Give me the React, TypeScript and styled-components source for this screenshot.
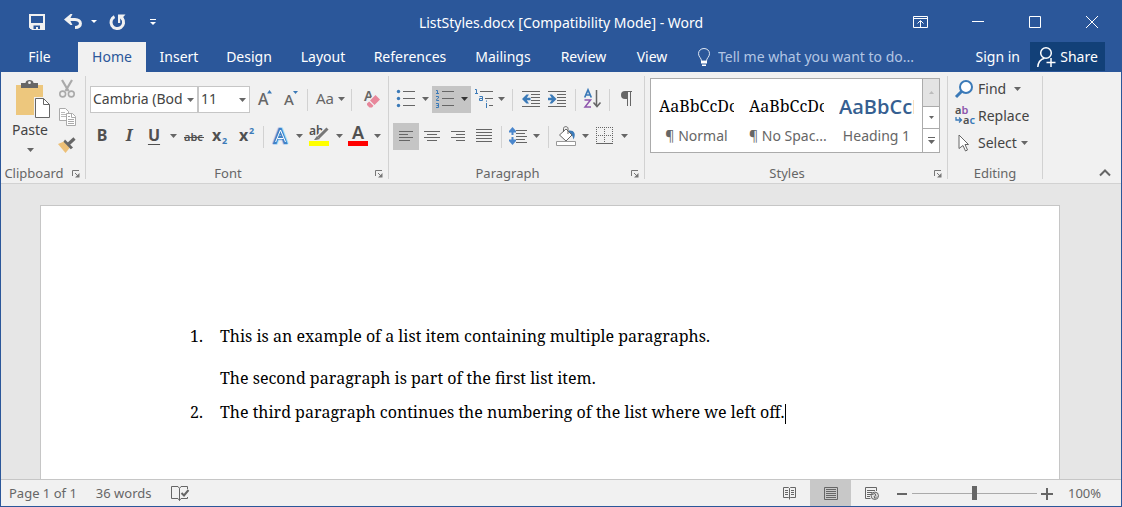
import React from "react";
import styled, { createGlobalStyle } from "styled-components";

const blue = "#2b579a";
const ink = "#444444";
const grey = "#666666";
const accent = "#3b7ab8";
const ui = '"Noto Sans", "Open Sans", sans-serif';
const serif = '"Noto Serif", "Droid Serif", Cambria, "Liberation Serif", serif';

const GlobalStyle = createGlobalStyle`
  *, *::before, *::after { box-sizing: border-box; }
  body { margin: 0; font-family: ${ui}; font-size: 14px; color: ${ink}; background: #e6e6e6; }
  button, input, select { font: inherit; color: inherit; margin: 0; padding: 0; border: 0; background: none; border-radius: 0; }
  button { cursor: default; white-space: nowrap; }
`;

const Drawing = styled.svg<{ $even: boolean }>`
  display: block;
  flex: none;
  overflow: visible;
  margin-top: ${(p) => (p.$even ? 1 : 0)}px;
`;

const Window = styled.div`
  display: flex;
  flex-direction: column;
  min-height: 100vh;
  border: 1px solid ${blue};
  border-top: 0;
`;

const TitleBar = styled.header`
  display: grid;
  grid-template-columns: 1fr auto 1fr;
  align-items: center;
  height: 42px;
  background: ${blue};
  color: #fff;
`;

const QuickAccess = styled.div`
  display: flex;
  align-items: center;
  padding-left: 19px;
`;

const Title = styled.h1`
  margin: 0;
  padding-top: 2px;
  font-size: 14px;
  font-weight: 400;
  white-space: nowrap;
`;

const WindowControls = styled.div`
  display: flex;
  justify-content: flex-end;
  padding-right: 1px;
`;

const BarButton = styled.button<{ $w: number }>`
  display: flex;
  align-items: center;
  justify-content: center;
  width: ${(p) => p.$w}px;
  height: 39px;
`;

const TabBar = styled.nav`
  display: flex;
  height: 30px;
  background: ${blue};
  color: #fff;
`;

const Tab = styled.button<{ $w: number; $active?: boolean }>`
  width: ${(p) => p.$w}px;
  padding-bottom: 2px;
  background: ${(p) => (p.$active ? "#f1f1f1" : "transparent")};
  color: ${(p) => (p.$active ? blue : "#fff")};
`;

const TellMe = styled.label`
  display: flex;
  flex: 1;
  align-items: center;
  gap: 8px;
  padding: 0 0 2px 15px;
`;

const TellMeInput = styled.input`
  flex: 1;
  min-width: 0;
  outline: none;
  &::placeholder { color: #b3c6e4; opacity: 1; }
`;

const Account = styled.div`
  display: flex;
  align-items: flex-start;
  gap: 10px;
  padding-right: 16px;
`;

const SignIn = styled.button`
  height: 30px;
  padding-bottom: 2px;
`;

const Share = styled.button`
  display: flex;
  align-items: center;
  justify-content: center;
  gap: 4px;
  width: 75px;
  height: 29px;
  background: #124078;
`;

const Ribbon = styled.section`
  display: flex;
  height: 112px;
  background: #f1f1f1;
  border-bottom: 1px solid #d2d2d2;
`;

const Group = styled.section<{ $w: number }>`
  display: flex;
  flex: none;
  flex-direction: column;
  justify-content: space-between;
  width: ${(p) => p.$w}px;
  margin: 4px 0;
  border-right: 1px solid #d2d2d2;
`;

const GroupBody = styled.div`
  display: flex;
  flex-direction: column;
  gap: 10px;
  padding: 10px 0 0 4px;
`;

const GroupFooter = styled.footer<{ $launcher?: boolean }>`
  display: grid;
  grid-template-columns: 1fr ${(p) => (p.$launcher ? "18px" : "0")};
  align-items: center;
  height: 12px;
  font-size: 13px;
  line-height: 12px;
  text-align: center;
  color: ${grey};
`;

const LauncherButton = styled.button`
  justify-self: end;
  margin-right: 5px;
`;

const Row = styled.div`
  display: flex;
  align-items: center;
  height: 27px;
`;

const Tool = styled.button<{ $w: number; $on?: boolean }>`
  display: flex;
  flex: none;
  align-items: center;
  justify-content: center;
  width: ${(p) => p.$w}px;
  height: 27px;
  padding-bottom: 2px;
  background: ${(p) => (p.$on ? "#c5c5c5" : "transparent")};
`;

const Divider = styled.span<{ $w: number }>`
  display: flex;
  flex: none;
  justify-content: center;
  width: ${(p) => p.$w}px;
  &::before { content: ""; width: 1px; height: 22px; background: #d2d2d2; }
`;

const Combo = styled.label<{ $w: number }>`
  display: grid;
  flex: none;
  align-items: center;
  width: ${(p) => p.$w}px;
  height: 27px;
  border: 1px solid #c6c6c6;
  background: #fff;
  & > * { grid-area: 1 / 1; }
  & > svg { justify-self: end; margin-right: 3px; pointer-events: none; }
`;

const ComboSelect = styled.select`
  appearance: none;
  width: 100%;
  height: 25px;
  padding: 0 15px 2px 2px;
  outline: none;
  overflow: hidden;
`;

const Glyph = styled.span<{ $italic?: boolean; $underline?: boolean }>`
  font-size: 16px;
  line-height: 21px;
  font-weight: 700;
  font-style: ${(p) => (p.$italic ? "italic" : "normal")};
  font-family: ${(p) => (p.$italic ? '"Noto Serif", "Liberation Serif", serif' : ui)};
  text-decoration: ${(p) => (p.$underline ? "underline" : "none")};
  text-underline-offset: 3px;
  color: #505050;
`;

const ClipboardBody = styled.div`
  display: grid;
  grid-template-columns: 50px 34px;
  padding-left: 4px;
`;

const PasteButton = styled.button`
  display: flex;
  flex-direction: column;
  align-items: center;
  padding-top: 3px;
  line-height: 24px;
`;

const ClipboardTools = styled.div`
  display: flex;
  flex-direction: column;
  gap: 1px;
`;

const Gallery = styled.div`
  display: flex;
  width: 290px;
  height: 75px;
  margin: 2px 0 0 5px;
  padding-left: 1px;
  border: 1px solid #ababab;
  background: #fff;
`;

const StyleCell = styled.button`
  display: flex;
  flex-direction: column;
  flex: none;
  width: 90px;
  padding: 14px 7px 0;
  text-align: center;
  color: ${grey};
`;

const Sample = styled.span<{ $heading?: boolean }>`
  overflow: hidden;
  width: 75px;
  height: 27px;
  line-height: 27px;
  text-align: left;
  font-family: ${(p) => (p.$heading ? '"Open Sans", "Noto Sans", sans-serif' : serif)};
  font-size: ${(p) => (p.$heading ? 20 : 16)}px;
  font-weight: ${(p) => (p.$heading ? 600 : 400)};
  color: ${(p) => (p.$heading ? "#365f91" : "#000")};
`;

const SampleName = styled.span`
  line-height: 32px;
  width: 75px;
`;

const GalleryScroll = styled.div`
  display: grid;
  grid-template-rows: 27px 22px 1fr;
  flex: 1;
  border-left: 1px solid #ababab;
`;

const ScrollButton = styled.button<{ $off?: boolean }>`
  display: flex;
  align-items: center;
  justify-content: center;
  background: ${(p) => (p.$off ? "#e3e3e3" : "#fff")};
  & + & { border-top: 1px solid #ababab; }
`;

const EditingBody = styled.div`
  display: flex;
  flex-direction: column;
  padding-left: 6px;
`;

const EditButton = styled.button`
  display: flex;
  align-items: center;
  height: 27px;
  padding-bottom: 2px;
  gap: 4px;
`;

const IconSlot = styled.span`
  display: flex;
  justify-content: center;
  width: 20px;
`;

const RibbonEnd = styled.div`
  display: flex;
  flex: 1;
  align-items: flex-end;
  justify-content: flex-end;
  padding: 0 10px 6px 0;
`;

const Workspace = styled.main`
  display: flex;
  flex: 1;
  padding: 21px 61px 0 39px;
  background: #e6e6e6;
`;

const Page = styled.article`
  flex: 1;
  padding: 120px 140px 40px 149px;
  border: 1px solid #c6c6c6;
  border-bottom: 0;
  background: #fff;
  color: #000;
  font-family: ${serif};
  font-size: 16px;
  font-kerning: none;
  line-height: 20px;
`;

const List = styled.ol`
  margin: 0;
  padding: 0;
  list-style: none;
`;

const Item = styled.li`
  display: grid;
  grid-template-columns: 30px 1fr;
  padding-bottom: 14px;
`;

const Paragraph = styled.p`
  margin: 0;
  & + & { margin-top: 22px; }
`;

const Caret = styled.span`
  display: inline-block;
  width: 1px;
  height: 20px;
  vertical-align: middle;
  background: #000;
`;

const StatusBar = styled.footer`
  display: flex;
  align-items: stretch;
  justify-content: space-between;
  height: 27px;
  border-top: 1px solid #c6c6c6;
  background: #f1f1f1;
  font-size: 13px;
  color: ${grey};
`;

const StatusGroup = styled.div<{ $gap?: number }>`
  display: flex;
  align-items: center;
  gap: ${(p) => p.$gap || 0}px;
  padding: 0 20px 0 8px;
`;

const ViewButton = styled.button<{ $on?: boolean }>`
  display: flex;
  align-items: center;
  justify-content: center;
  width: 41px;
  height: 26px;
  background: ${(p) => (p.$on ? "#c8c8c8" : "transparent")};
`;

const ZoomStep = styled.button`
  display: flex;
  align-items: center;
  justify-content: center;
  width: 20px;
  height: 26px;
`;

const Slider = styled.input`
  appearance: none;
  width: 125px;
  height: 14px;
  background: linear-gradient(#aaa, #aaa) center / 100% 1px no-repeat;
  &::-webkit-slider-thumb { appearance: none; width: 5px; height: 14px; background: ${grey}; border: 0; }
`;

const ZoomValue = styled.span`
  margin-left: 11px;
  width: 33px;
  text-align: center;
`;

const Svg = ({ w, h, children }: { w: number; h: number; children: React.ReactNode }) => (
  <Drawing $even={h % 2 === 0} width={w} height={h} viewBox={`0 0 ${w} ${h}`} fill="none" aria-hidden="true">
    {children}
  </Drawing>
);

const Down = ({ color = grey }: { color?: string }) => (
  <Svg w={7} h={5}><path d="M0 1h7L3.500 5z" fill={color} /></Svg>
);

const More = ({ color = grey }: { color?: string }) => (
  <Svg w={7} h={7}><path d="M0 .5h7" stroke={color} /><path d="M0 3h7L3.500 7z" fill={color} /></Svg>
);

const Launcher = () => (
  <Svg w={8} h={8}>
    <path d="M.5 6V.5H7M3 3l3 3" stroke="#777" />
    <path d="M7.500 3v4.500H3z" fill="#777" />
  </Svg>
);

const Footer = ({ name, launcher = true }: { name: string; launcher?: boolean }) => (
  <GroupFooter $launcher={launcher}>
    <span>{name}</span>
    {launcher && <LauncherButton aria-label={`${name} settings`}><Launcher /></LauncherButton>}
  </GroupFooter>
);

const AlignIcon = ({ rows, w = 16 }: { rows: [number, number][]; w?: number }) => (
  <Svg w={w} h={13}>
    {rows.map(([x, len], i) => (
      <path key={i} d={`M${x} ${i * 3 + (rows.length === 4 ? 2.5 : 0.5)}h${len}`} stroke={grey} />
    ))}
  </Svg>
);

const IndentIcon = ({ out }: { out?: boolean }) => (
  <Svg w={18} h={16}>
    <path d="M0 .5h18M9 3.500h9M9 6.500h9M9 9.500h9M9 12.500h9M0 15.500h18" stroke={grey} />
    {out
      ? <path d="M0 8l4.500-4.500H7L4.800 6.700H8.500v2.600H4.800L7 12.500H4.500z" fill={accent} />
      : <path d="M8.500 8L4 3.500H1.500L3.700 6.700H0v2.600h3.700L1.500 12.500H4z" fill={accent} />}
  </Svg>
);

const t = { fontFamily: "Noto Sans", fontWeight: 700 } as const;

const SaveIcon = () => (
  <Svg w={16} h={16}>
    <path d="M1 1h14v14H3.500L1 13z" stroke="#f1f1f1" strokeWidth="2" />
    <path d="M1 9h14v6H1z" fill="#f1f1f1" />
    <path d="M4.500 11.500H11V15H9v-2H7v2H4.500z" fill={blue} />
  </Svg>
);

const UndoIcon = () => (
  <Svg w={18} h={15}>
    <path d="M2.500 5.500h8.500c7 0 7.500 8 0 8" stroke="#f1f1f1" strokeWidth="3" />
    <path d="M0 5.500L6.500 0h2L5.700 5.500 8.500 11h-2z" fill="#f1f1f1" />
  </Svg>
);

const RedoIcon = () => (
  <Svg w={17} h={16}>
    <path d="M5.500 2.600A6.300 6.300 0 1 0 13.300 4.400" stroke="#f1f1f1" strokeWidth="3" />
    <path d="M9 .5h7.500L14.200 3l1 3-1.700.8-2.300-2.300V9H9z" fill="#f1f1f1" />
  </Svg>
);

const PasteIcon = () => (
  <Svg w={40} h={38}>
    <g transform="translate(6 0)">
      <path d="M0 5h27v30H0z" fill="#edc77d" />
      <path d="M5 3h4.500c0-4 8-4 8 0H22v5H5z" fill={grey} />
      <circle cx="13.500" cy="2.700" r="1.400" fill="#f1f1f1" />
      <path d="M18 17h10l6.500 6.500V38H18z" fill="#f1f1f1" />
      <path d="M19.500 18.500h8l6 6v13h-14z" fill="#fff" stroke="#666" />
      <path d="M27.500 18.500v6h6" stroke="#666" />
    </g>
  </Svg>
);

const CutIcon = () => (
  <Svg w={16} h={18}>
    <path d="M3 0l6.500 11M13 0L6.500 11" stroke="#aaa" strokeWidth="2.200" />
    <circle cx="3.700" cy="14" r="2.900" stroke="#aaa" strokeWidth="1.600" />
    <circle cx="12.300" cy="14" r="2.900" stroke="#aaa" strokeWidth="1.600" />
  </Svg>
);

const CopyIcon = () => (
  <Svg w={17} h={18}>
    <path d="M.5.5h6l3 3v9h-9z" fill="#fff" stroke="#aaa" />
    <path d="M2 4.500h4M2 6.500h5M2 8.500h5" stroke="#bbb" />
    <path d="M7.500 5.500h6l3 3v9h-9z" fill="#fff" stroke="#aaa" />
    <path d="M12.500 5.500v4h4M9 8.500h2M9 11.500h6M9 13.500h6M9 15.500h6" stroke="#aaa" />
  </Svg>
);

const PainterIcon = () => (
  <Svg w={18} h={16}>
    <path d="M0 7l6-2.500 6 6L7.500 16z" fill="#edc077" />
    <path d="M7 2.500l8 8-2.200 1.800-7.300-7.600z" fill={grey} />
    <path d="M10.500 7l6-5.500" stroke={grey} strokeWidth="3.200" />
  </Svg>
);

const App = () => (
  <>
    <GlobalStyle />
    <Window>
      <TitleBar>
        <QuickAccess>
          <BarButton $w={33} aria-label="Save"><SaveIcon /></BarButton>
          <BarButton $w={39} aria-label="Undo"><UndoIcon /></BarButton>
          <BarButton $w={4} aria-label="Undo history"><Svg w={6} h={3}><path d="M0 0h6L3 3z" fill="#fff" /></Svg></BarButton>
          <BarButton $w={42} aria-label="Repeat"><RedoIcon /></BarButton>
          <BarButton $w={29} aria-label="Customize toolbar"><Svg w={6} h={6}><path d="M0 .5h6" stroke="#fff" /><path d="M0 3h6L3 6z" fill="#fff" /></Svg></BarButton>
        </QuickAccess>
        <Title>ListStyles.docx [Compatibility Mode] - Word</Title>
        <WindowControls>
          <BarButton $w={58} aria-label="Ribbon display options">
            <Svg w={15} h={12}><path d="M.5.5h14v11H.5zM0 2.500h15M7.500 11V5M4.500 7.500l3-3 3 3" stroke="#fff" /></Svg>
          </BarButton>
          <BarButton $w={57} aria-label="Minimize"><Svg w={12} h={2}><path d="M0 .5h12" stroke="#fff" /></Svg></BarButton>
          <BarButton $w={57} aria-label="Maximize"><Svg w={12} h={12}><path d="M.5.5h11v11H.5z" stroke="#fff" /></Svg></BarButton>
          <BarButton $w={57} aria-label="Close"><Svg w={12} h={12}><path d="M0 0l12 12M12 0L0 12" stroke="#fff" /></Svg></BarButton>
        </WindowControls>
      </TitleBar>

      <TabBar>
        <Tab $w={77}>File</Tab>
        <Tab $w={68} $active>Home</Tab>
        <Tab $w={66}>Insert</Tab>
        <Tab $w={74}>Design</Tab>
        <Tab $w={74}>Layout</Tab>
        <Tab $w={100}>References</Tab>
        <Tab $w={86}>Mailings</Tab>
        <Tab $w={75}>Review</Tab>
        <Tab $w={62}>View</Tab>
        <TellMe>
          <Svg w={12} h={18}>
            <path d="M3.500 13c0-3-3-4-3-7.300C.5 2.500 3 .5 6 .5s5.500 2 5.500 5.200c0 3.300-3 4.300-3 7.300z" stroke="#dfe7f3" />
            <path d="M3 13h6v2.500H3zM4 16.500h4v1.500H4z" fill="#fff" />
          </Svg>
          <TellMeInput aria-label="Tell me what you want to do" placeholder="Tell me what you want to do..." />
        </TellMe>
        <Account>
          <SignIn>Sign in</SignIn>
          <Share>
            <Svg w={19} h={20}>
              <circle cx="9" cy="6" r="5.300" stroke="#fff" strokeWidth="1.500" />
              <path d="M.8 20c.3-5 3-7.800 6.700-8.800M14 11v9M9.500 15.500h9" stroke="#fff" strokeWidth="1.500" />
            </Svg>
            Share
          </Share>
        </Account>
      </TabBar>

      <Ribbon>
        <Group $w={85}>
          <ClipboardBody>
            <PasteButton>
              <PasteIcon />
              Paste
              <Svg w={7} h={11}><path d="M0 6h7l-3.500 4z" fill={grey} /></Svg>
            </PasteButton>
            <ClipboardTools>
              <Tool $w={24} aria-label="Cut"><CutIcon /></Tool>
              <Tool $w={24} aria-label="Copy"><CopyIcon /></Tool>
              <Tool $w={24} aria-label="Format painter"><PainterIcon /></Tool>
            </ClipboardTools>
          </ClipboardBody>
          <Footer name="Clipboard" />
        </Group>

        <Group $w={303}>
          <GroupBody>
            <Row>
              <Combo $w={108}>
                <ComboSelect aria-label="Font"><option>Cambria (Body)</option></ComboSelect>
                <Down />
              </Combo>
              <Combo $w={52}>
                <ComboSelect aria-label="Font size"><option>11</option></ComboSelect>
                <Down />
              </Combo>
              <Tool $w={30} aria-label="Grow font">
                <Svg w={15} h={17}><text x="0" y="15" fontSize="16" fill={grey} style={{ ...t, fontWeight: 500 }}>A</text><path d="M9 3.500L11.500 0 14 3.500z" fill={accent} /></Svg>
              </Tool>
              <Tool $w={22} aria-label="Shrink font">
                <Svg w={15} h={17}><text x="0" y="15" fontSize="15" fill={grey} style={{ ...t, fontWeight: 500 }}>A</text><path d="M9 1h5l-2.500 3z" fill={accent} /></Svg>
              </Tool>
              <Divider $w={10} />
              <Tool $w={26} aria-label="Change case"><Svg w={19} h={17}><text x="0" y="14" fontSize="15" fill={grey} fontFamily="Noto Sans">Aa</text></Svg></Tool>
              <Tool $w={6} aria-label="Case options"><Down /></Tool>
              <Divider $w={15} />
              <Tool $w={26} aria-label="Clear formatting">
                <Svg w={16} h={19}>
                  <text x="0" y="12" fontSize="14" fill={grey} fontFamily="Noto Sans" fontWeight="600">A</text>
                  <path d="M2 14l9-9.500 6 6-8 9H5z" fill="#f1f1f1" />
                  <path d="M6 11.500L11.500 6l4.500 4.500-5.500 5.500zM5.200 12.500l4.300 4.300-1.500 1.700H5.500L3 16v-1.500z" fill="#e8879b" />
                </Svg>
              </Tool>
            </Row>
            <Row>
              <Tool $w={24} aria-label="Bold"><Glyph>B</Glyph></Tool>
              <Tool $w={30} aria-label="Italic"><Glyph $italic>I</Glyph></Tool>
              <Tool $w={20} aria-label="Underline"><Glyph $underline>U</Glyph></Tool>
              <Tool $w={18} aria-label="Underline style"><Down /></Tool>
              <Tool $w={24} aria-label="Strikethrough">
                <Svg w={20} h={15}><text x="0" y="13" fontSize="11" fontFamily="Noto Sans" fontWeight="600" fill="#505050">abc</text><path d="M0 9.500h20" stroke="#505050" /></Svg>
              </Tool>
              <Tool $w={28} aria-label="Subscript">
                <Svg w={16} h={19}><text x="0" y="15" fontSize="16" fill="#505050" style={t}>x</text><text x="10" y="18" fontSize="9" fill={accent} style={t}>2</text></Svg>
              </Tool>
              <Tool $w={26} aria-label="Superscript">
                <Svg w={16} h={19}><text x="0" y="15" fontSize="16" fill="#505050" style={t}>x</text><text x="10" y="8" fontSize="9" fill={accent} style={t}>2</text></Svg>
              </Tool>
              <Divider $w={7} />
              <Tool $w={28} aria-label="Text effects">
                <Svg w={16} h={19}>
                  <text x="1" y="17" fontSize="19" fill="#bcd6f0" stroke="#bcd6f0" strokeWidth="4" strokeLinejoin="round" fontFamily="Noto Sans">A</text>
                  <text x="1" y="17" fontSize="19" fill="#3f83c8" stroke="#3f83c8" strokeWidth="2" fontFamily="Noto Sans">A</text>
                  <path d="M2.600 16L7.500 4l5 12M4.500 12.500h6" stroke="#fff" />
                </Svg>
              </Tool>
              <Tool $w={8} aria-label="Effect options"><Down /></Tool>
              <Tool $w={32} aria-label="Highlight">
                <Svg w={20} h={20}>
                  <text x="0" y="9" fontSize="12" fill="#505050" fontFamily="Noto Sans" fontWeight="600">ab</text>
                  <path d="M18.500 2L8.500 12" stroke="#f1f1f1" strokeWidth="5" /><path d="M18.500 2.500l-9 9" stroke="#777" strokeWidth="3" /><path d="M8 10l3 3-4 1H5z" fill="#777" />
                  <path d="M0 15h20v5H0z" fill="#ff0" />
                </Svg>
              </Tool>
              <Tool $w={8} aria-label="Highlight colour"><Down /></Tool>
              <Tool $w={30} aria-label="Font colour">
                <Svg w={20} h={20}><text x="4" y="13" fontSize="18" fill="#505050" fontFamily="Noto Sans" fontWeight="600">A</text><path d="M0 15h20v5H0z" fill="red" /></Svg>
              </Tool>
              <Tool $w={8} aria-label="Font colour options"><Down /></Tool>
            </Row>
          </GroupBody>
          <Footer name="Font" />
        </Group>

        <Group $w={256}>
          <GroupBody>
            <Row>
              <Tool $w={26} aria-label="Bullets">
                <Svg w={18} h={17}><path d="M6 1.500h12M6 8.500h12M6 15.500h12" stroke={grey} /><g fill={accent}><circle cx="1.500" cy="1.500" r="1.700" /><circle cx="1.500" cy="8.500" r="1.700" /><circle cx="1.500" cy="15.500" r="1.700" /></g></Svg>
              </Tool>
              <Tool $w={13} aria-label="Bullet options"><Down /></Tool>
              <Tool $w={26} $on aria-label="Numbering">
                <Svg w={18} h={19}>
                  <path d="M6 2.500h12M6 9.500h12M6 16.500h12" stroke={grey} />
                  <path d="M0 1.500h1.500V4M0 4.500h3M0 7.500h2.500v1.500L.5 10.500v1H3M0 14.500h2.500v4H0M.5 16.500h2" stroke={accent} />
                </Svg>
              </Tool>
              <Tool $w={13} $on aria-label="Numbering options"><Down color="#333" /></Tool>
              <Tool $w={26} aria-label="Multilevel list">
                <Svg w={18} h={19}>
                  <path d="M5 2.500h13M10 9.500h8M14 16.500h4" stroke={grey} />
                  <path d="M0 .5h1.500V4M0 4.500h3M4.500 7.500h3v4h-3v-2h3M11.500 14v5M11.500 11.500v1.200" stroke={accent} />
                </Svg>
              </Tool>
              <Tool $w={8} aria-label="Multilevel options"><Down /></Tool>
              <Divider $w={15} />
              <Tool $w={22} aria-label="Decrease indent"><IndentIcon out /></Tool>
              <Tool $w={30} aria-label="Increase indent"><IndentIcon /></Tool>
              <Divider $w={6} />
              <Tool $w={29} aria-label="Sort">
                <Svg w={17} h={19}>
                  <path d="M.7 8.500L4 .8l3.300 7.700M2 6h4" stroke={accent} strokeWidth="1.700" />
                  <path d="M.5 11h6l-5.500 7h6" stroke="#8e56ac" strokeWidth="1.500" />
                  <path d="M12.500 1v16M9.500 13.500l3.500 4 3.500-4" stroke={grey} strokeWidth="1.500" />
                </Svg>
              </Tool>
              <Divider $w={5} />
              <Tool $w={28} aria-label="Show paragraph marks">
                <Svg w={11} h={15}><path d="M11 .5H5M6.500 0v15M9.500 0v15" stroke={grey} /><path d="M7 0H4a4 4 0 0 0 0 8h3z" fill={grey} /></Svg>
              </Tool>
            </Row>
            <Row>
              <Tool $w={26} $on aria-label="Align left"><AlignIcon w={14} rows={[[0, 14], [0, 9], [0, 14], [0, 11]]} /></Tool>
              <Tool $w={26} aria-label="Centre"><AlignIcon rows={[[0, 16], [3, 10], [0, 16], [3, 10]]} /></Tool>
              <Tool $w={26} aria-label="Align right"><AlignIcon w={14} rows={[[0, 14], [5, 9], [0, 14], [5, 9]]} /></Tool>
              <Tool $w={26} aria-label="Justify"><AlignIcon rows={[[0, 16], [0, 16], [0, 16], [0, 16], [0, 16]]} /></Tool>
              <Divider $w={9} />
              <Tool $w={24} aria-label="Line spacing">
                <Svg w={18} h={18}>
                  <path d="M7 3.500h11M7 6.500h9M7 9.500h11M7 12.500h9M7 15.500h11" stroke={grey} />
                  <path d="M3.500 0L7 4v1.500H4.500V8h-2V5.500H0V4zM3.500 18L7 14v-1.500H4.500V10h-2v2.500H0V14z" fill="#4a86cc" />
                </Svg>
              </Tool>
              <Tool $w={12} aria-label="Spacing options"><Down /></Tool>
              <Divider $w={12} />
              <Tool $w={24} aria-label="Shading">
                <Svg w={20} h={20}>
                  <path d="M13 4.500c5-.5 7.500 3 4.500 9-1-4-1.500-5-4.500-6z" fill={accent} />
                  <path d="M3.500 9L10 3l6 6-6 6z" fill="#fff" stroke={grey} />
                  <path d="M7.500 6V2.500C7.500 0 12 0 12 2.500V8" stroke={grey} />
                  <path d="M.5 15.500h19v4H.5z" fill="#fff" stroke="#999" />
                </Svg>
              </Tool>
              <Tool $w={14} aria-label="Shading colour"><Down /></Tool>
              <Tool $w={25} aria-label="Borders">
                <Svg w={17} h={17}><path d="M0 .5h17M.5 0v15M16.500 0v15M8.500 0v15M0 8.500h17" stroke={grey} strokeDasharray="1 1" /><path d="M0 16.500h17" stroke={grey} /></Svg>
              </Tool>
              <Tool $w={14} aria-label="Border options"><Down /></Tool>
            </Row>
          </GroupBody>
          <Footer name="Paragraph" />
        </Group>

        <Group $w={303}>
          <Gallery>
            <StyleCell><Sample>AaBbCcDc</Sample><SampleName>¶ Normal</SampleName></StyleCell>
            <StyleCell><Sample>AaBbCcDc</Sample><SampleName>¶ No Spac...</SampleName></StyleCell>
            <StyleCell><Sample $heading>AaBbCcD</Sample><SampleName>Heading 1</SampleName></StyleCell>
            <GalleryScroll>
              <ScrollButton $off aria-label="Previous styles"><Svg w={5} h={3}><path d="M0 3h5L2.500 0z" fill="#bbb" /></Svg></ScrollButton>
              <ScrollButton aria-label="Next styles"><Svg w={5} h={3}><path d="M0 0h5L2.500 3z" fill={grey} /></Svg></ScrollButton>
              <ScrollButton aria-label="More styles"><More /></ScrollButton>
            </GalleryScroll>
          </Gallery>
          <Footer name="Styles" />
        </Group>

        <Group $w={95}>
          <EditingBody>
            <EditButton>
              <IconSlot><Svg w={18} h={18}><circle cx="11" cy="7" r="6" fill="#fff" stroke={accent} strokeWidth="2" /><path d="M7 11l-6 6" stroke={accent} strokeWidth="3" /></Svg></IconSlot>
              Find&nbsp; <Down />
            </EditButton>
            <EditButton>
              <IconSlot>
                <Svg w={19} h={19}>
                  <text x="0" y="8" fontSize="11" fontFamily="Noto Sans" fontWeight="600" fill="#505050">a<tspan fill="#8e56ac">b</tspan></text>
                  <text x="8" y="18" fontSize="11" fontFamily="Noto Sans" fontWeight="600" fill="#505050">a<tspan fill={accent}>c</tspan></text>
                  <path d="M1 11v3h5M4 11.500l2.500 2.500L4 16.500" stroke={accent} strokeWidth="1.300" />
                </Svg>
              </IconSlot>
              Replace
            </EditButton>
            <EditButton>
              <IconSlot><Svg w={12} h={18}><path d="M1 1l9.500 9.500H7l2.500 5.500-2 1L5 11.500l-4 3z" fill="#fff" stroke={grey} /></Svg></IconSlot>
              Select <Down />
            </EditButton>
          </EditingBody>
          <Footer name="Editing" launcher={false} />
        </Group>
        <RibbonEnd>
          <button aria-label="Collapse the ribbon"><Svg w={12} h={8}><path d="M1 6.500l5-5 5 5" stroke={grey} strokeWidth="2" /></Svg></button>
        </RibbonEnd>
      </Ribbon>

      <Workspace>
        <Page>
          <List>
            <Item>
              <span>1.</span>
              <div>
                <Paragraph>This is an example of a list item containing multiple paragraphs.</Paragraph>
                <Paragraph>The second paragraph is part of the first list item.</Paragraph>
              </div>
            </Item>
            <Item>
              <span>2.</span>
              <Paragraph>The third paragraph continues the numbering of the list where we left off.<Caret /></Paragraph>
            </Item>
          </List>
        </Page>
      </Workspace>

      <StatusBar>
        <StatusGroup $gap={19}>
          <span>Page 1 of 1</span>
          <span>36 words</span>
          <button aria-label="Proofing">
            <Svg w={18} h={15}>
              <path d="M8.500 2.500v12M8.500 2.500L7 .5H.5v12H7l1.500 2L10 12.500h6.500V11M8.500 2.500l1.500-2h6.500V3" stroke={grey} />
              <path d="M10.500 7l2.500 2.500L17.500 4" stroke={grey} strokeWidth="2" />
            </Svg>
          </button>
        </StatusGroup>
        <StatusGroup>
          <ViewButton aria-label="Read mode">
            <Svg w={13} h={13}><path d="M6.500 1.500v11M6.500 1.500L5.500.5h-5v10h5l1 1 1-1h5V.5h-5zM2 3.500h3M2 5.500h3M2 7.500h3M8 3.500h3M8 5.500h3M8 7.500h3" stroke={grey} /></Svg>
          </ViewButton>
          <ViewButton $on aria-label="Print layout">
            <Svg w={14} h={13}><path d="M.5.5h13v12H.5zM2 2.500h10M2 4.500h10M2 6.500h10M2 8.500h10M2 10.500h10" stroke={grey} /></Svg>
          </ViewButton>
          <ViewButton aria-label="Web layout">
            <Svg w={14} h={13}>
              <path d="M11.500 4V.5H.5v11h5M2 3.500h8M2 5.500h5M2 7.500h4M2 9.500h3" stroke={grey} />
              <circle cx="9.800" cy="8.800" r="3.700" fill="#e6e6e6" stroke={grey} />
              <path d="M7 7.500l3-1 1 2-2 1 1 2 2-2" stroke={grey} />
            </Svg>
          </ViewButton>
          <ZoomStep aria-label="Zoom out"><Svg w={10} h={2}><path d="M0 1h10" stroke={grey} strokeWidth="2" /></Svg></ZoomStep>
          <Slider type="range" aria-label="Zoom" min={10} max={190} defaultValue={100} />
          <ZoomStep aria-label="Zoom in"><Svg w={12} h={12}><path d="M0 6h12M6 0v12" stroke={grey} strokeWidth="2" /></Svg></ZoomStep>
          <ZoomValue>100%</ZoomValue>
        </StatusGroup>
      </StatusBar>
    </Window>
  </>
);

export default App;
